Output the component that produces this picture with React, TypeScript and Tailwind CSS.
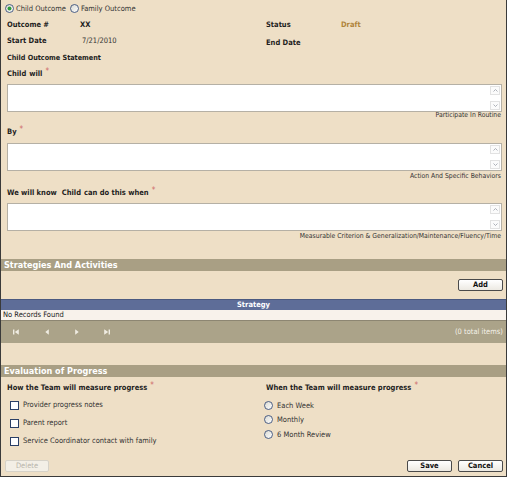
import React from "react";

function Req() {
  return <span className="text-[#cf6a6a] text-[8px] relative top-[-2px] ml-[3px] font-normal">*</span>;
}

function Radio({ checked }: { checked?: boolean }) {
  return (
    <svg width="9" height="9" viewBox="0 0 9 9" className="shrink-0">
      <defs>
        <linearGradient id="rg" x1="0" y1="0" x2="1" y2="1">
          <stop offset="0" stopColor="#d8d8d0" />
          <stop offset="1" stopColor="#ffffff" />
        </linearGradient>
      </defs>
      <circle cx="4.5" cy="4.5" r="4" fill="url(#rg)" stroke="#3a4f78" strokeWidth="0.9" />
      {checked && <circle cx="4.5" cy="4.5" r="2" fill="#2f9a3c" />}
    </svg>
  );
}

function Checkbox() {
  return <div className="w-[9px] h-[9px] border border-[#2a3f66] bg-white shrink-0" />;
}

function TextBox() {
  return (
    <div className="h-[28px] bg-white border border-[#b5b0a5] flex justify-end">
      <div className="w-[11px] flex flex-col justify-between py-[1px] pr-[1px]">
        <div className="h-[9px] border border-[#e2e2e2] bg-[#fbfbfb] flex items-center justify-center">
          <svg width="5" height="3" viewBox="0 0 5 3">
            <path d="M0.5 2.5 L2.5 0.5 L4.5 2.5" fill="none" stroke="#9aa0a8" strokeWidth="0.8" />
          </svg>
        </div>
        <div className="h-[9px] border border-[#e2e2e2] bg-[#fbfbfb] flex items-center justify-center">
          <svg width="5" height="3" viewBox="0 0 5 3">
            <path d="M0.5 0.5 L2.5 2.5 L4.5 0.5" fill="none" stroke="#9aa0a8" strokeWidth="0.8" />
          </svg>
        </div>
      </div>
    </div>
  );
}

function Btn({ children, disabled }: { children: React.ReactNode; disabled?: boolean }) {
  return (
    <div
      className={
        disabled
          ? "w-[44px] h-[12px] rounded-[2px] border border-[#d6d2c8] bg-[#f3efe6] text-[#b9b5ab] flex items-center justify-center text-[7.5px]"
          : "w-[45px] h-[12px] rounded-[2px] border border-[#4a4a4a] bg-gradient-to-b from-white to-[#ece9e2] text-[#111] font-bold flex items-center justify-center text-[7.5px]"
      }
    >
      {children}
    </div>
  );
}

export default function App() {
  return (
    <div className="w-[507px] h-[477px] bg-[#EEDFC6] border-l border-r border-b border-[#3a3a3a] flex flex-col font-['DejaVu_Sans_Condensed','DejaVu_Sans',sans-serif] text-[#1e1e1e] text-[7.5px] leading-none overflow-hidden">
      {/* Radios */}
      <div className="h-[17px] pl-[4px] flex items-center gap-[2px] text-[#333]">
        <Radio checked />
        <span className="mr-[2px]">Child Outcome</span>
        <Radio />
        <span>Family Outcome</span>
      </div>

      <div className="pl-[6px] pr-[4px] flex flex-col">
        <div className="h-[15px] flex items-center font-bold">
          <span className="w-[73px]">Outcome #</span>
          <span className="w-[186px]">XX</span>
          <span className="w-[75px]">Status</span>
          <span className="text-[#b0843a]">Draft</span>
        </div>
        <div className="h-[17px] flex items-center">
          <span className="w-[75px] font-bold">Start Date</span>
          <span className="w-[184px] text-[#333]">7/21/2010</span>
          <span className="font-bold relative top-[2px]">End Date</span>
        </div>
        <div className="h-[18px] flex items-center font-bold text-[7.2px]">Child Outcome Statement</div>
        <div className="h-[14px] flex items-center font-bold">
          <span>Child</span>
          <span className="ml-[3px]">will</span>
          <Req />
        </div>
        <div className="mt-[3px]">
          <TextBox />
        </div>
        <div className="h-[7px] flex items-center justify-end pr-[1px] text-[6.8px] text-[#333]">Participate In Routine</div>

        <div className="mt-[6px] h-[14px] flex items-center font-bold">
          <span>By</span>
          <Req />
        </div>
        <div className="mt-[4px]">
          <TextBox />
        </div>
        <div className="mt-[2px] h-[7px] flex items-center justify-end pr-[1px] text-[6.8px] text-[#333]">Action And Specific Behaviors</div>

        <div className="mt-[6px] h-[14px] flex items-center font-bold">
          <span>We will know</span>
          <span className="ml-[5px]">Child</span>
          <span className="ml-[3px]">can do this when</span>
          <Req />
        </div>
        <div className="mt-[3px]">
          <TextBox />
        </div>
        <div className="mt-[2px] h-[7px] flex items-center justify-end pr-[1px] text-[6.8px] text-[#333]">
          Measurable Criterion &amp; Generalization/Maintenance/Fluency/Time
        </div>
      </div>

      {/* Strategies */}
      <div className="mt-[19px] h-[12px] bg-[#A99F84] text-white font-bold text-[9px] flex items-center pl-[3px]">
        Strategies And Activities
      </div>
      <div className="mt-[8px] flex justify-end pr-[3px]">
        <Btn>Add</Btn>
      </div>
      <div className="mt-[8px] h-[11px] bg-[#5E6D98] text-white font-bold flex items-center justify-center border-t border-[#4a5980]">
        Strategy
      </div>
      <div className="h-[11px] bg-[#F8F2EB] border-b border-[#8d8672] flex items-center pl-[2px] text-[#222]">
        No Records Found
      </div>
      <div className="h-[22px] bg-[#ABA389] flex items-center text-[#f4f1e8]">
        <div className="flex items-center">
          <svg width="6" height="6" viewBox="0 0 6 6" className="ml-[12px]">
            <rect x="0" y="0.5" width="1.4" height="5" fill="#efece2" />
            <path d="M5.8 0.3 L1.8 3 L5.8 5.7 Z" fill="#efece2" />
          </svg>
          <svg width="4" height="6" viewBox="0 0 4 6" className="ml-[26px]">
            <path d="M3.8 0.3 L0.3 3 L3.8 5.7 Z" fill="#efece2" />
          </svg>
          <svg width="4" height="6" viewBox="0 0 4 6" className="ml-[26px]">
            <path d="M0.2 0.3 L3.7 3 L0.2 5.7 Z" fill="#efece2" />
          </svg>
          <svg width="6" height="6" viewBox="0 0 6 6" className="ml-[25px]">
            <path d="M0.2 0.3 L4.2 3 L0.2 5.7 Z" fill="#efece2" />
            <rect x="4.6" y="0.5" width="1.4" height="5" fill="#efece2" />
          </svg>
        </div>
        <span className="ml-auto pr-[3px] text-[7.5px]">(0 total items)</span>
      </div>

      {/* Evaluation */}
      <div className="mt-[22px] h-[12px] bg-[#A99F84] text-white font-bold text-[9px] flex items-center pl-[3px]">
        Evaluation of Progress
      </div>
      <div className="flex pl-[6px] pr-[4px]">
        <div className="w-[256px] flex flex-col">
          <div className="mt-[4px] h-[14px] flex items-center font-bold">
            <span>How the Team will measure progress</span>
            <Req />
          </div>
          <div className="mt-[1px] pl-[3px] flex flex-col text-[#333]">
            {["Provider progress notes", "Parent report", "Service Coordinator contact with family"].map((t) => (
              <div key={t} className="h-[18px] flex items-center gap-[4px]">
                <Checkbox />
                <span>{t}</span>
              </div>
            ))}
          </div>
        </div>
        <div className="flex flex-col">
          <div className="mt-[4px] h-[14px] flex items-center font-bold pl-[3px]">
            <span>When the Team will measure progress</span>
            <Req />
          </div>
          <div className="mt-[3px] pl-[1px] flex flex-col text-[#333]">
            {["Each Week", "Monthly", "6 Month Review"].map((t) => (
              <div key={t} className="h-[14.5px] flex items-center gap-[4px]">
                <Radio />
                <span>{t}</span>
              </div>
            ))}
          </div>
        </div>
      </div>

      <div className="mt-auto mb-[4px] flex items-center pl-[4px] pr-[3px]">
        <Btn disabled>Delete</Btn>
        <div className="ml-auto flex gap-[6px]">
          <Btn>Save</Btn>
          <Btn>Cancel</Btn>
        </div>
      </div>
    </div>
  );
}
